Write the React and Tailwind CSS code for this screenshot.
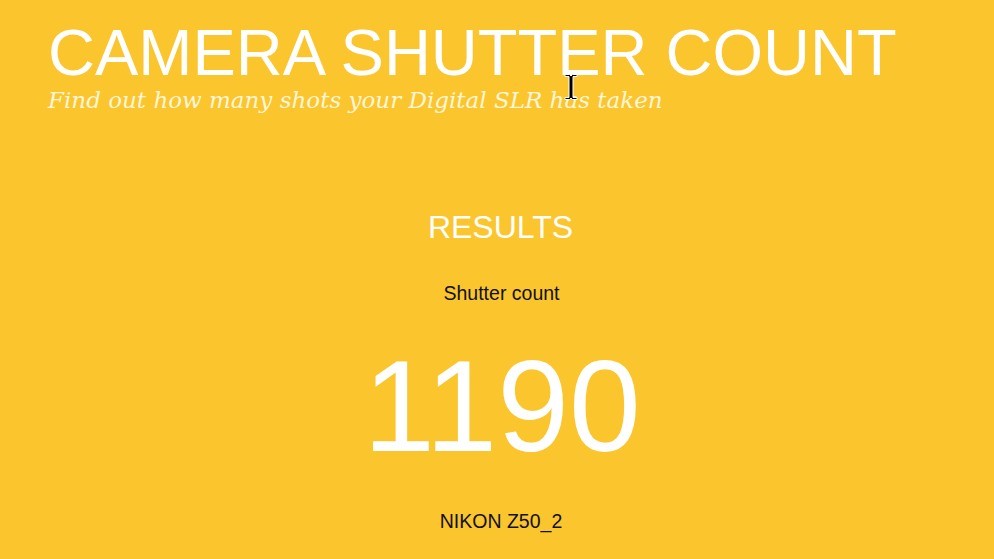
export default function App() {
  return (
    <div className="relative min-h-screen w-full overflow-hidden bg-[#fbc52d] font-['Liberation_Sans',Arial,sans-serif]">
      <header className="pt-[20px] pl-[48px]">
        <h1 className="text-[65px] leading-[65px] font-normal text-white whitespace-nowrap">
          CAMERA SHUTTER COUNT
        </h1>
        <p className="mt-[4px] font-['DejaVu_Serif',Georgia,serif] italic text-[23px] leading-[23px] text-[#fff6da] whitespace-nowrap">
          Find out how many shots your Digital SLR has taken
        </p>
      </header>

      <section className="mt-[99px] flex flex-col items-center">
        <h2 className="ml-[7px] text-[32px] leading-[32px] font-normal text-white">RESULTS</h2>
        <p className="ml-[9px] mt-[40.5px] text-[19.5px] leading-[19px] text-[#111]">Shutter count</p>
        <p className="ml-[10px] mt-[39px] text-[129px] leading-[128px] text-white">1190</p>
        <p className="ml-[8px] mt-[42px] text-[19.5px] leading-[19px] text-[#111]">NIKON Z50_2</p>
      </section>

      <svg
        className="absolute left-[563px] top-[73px]"
        width="16"
        height="28"
        viewBox="0 0 16 28"
      >
        <path
          d="M2 1.5h4.5l1.5 1.5 1.5-1.5H14v2h-4v21h4v2H9.5L8 25l-1.5 1.5H2v-2h4v-21H2z"
          fill="#000"
          stroke="#fff"
          strokeWidth="1"
        />
      </svg>
    </div>
  );
}
